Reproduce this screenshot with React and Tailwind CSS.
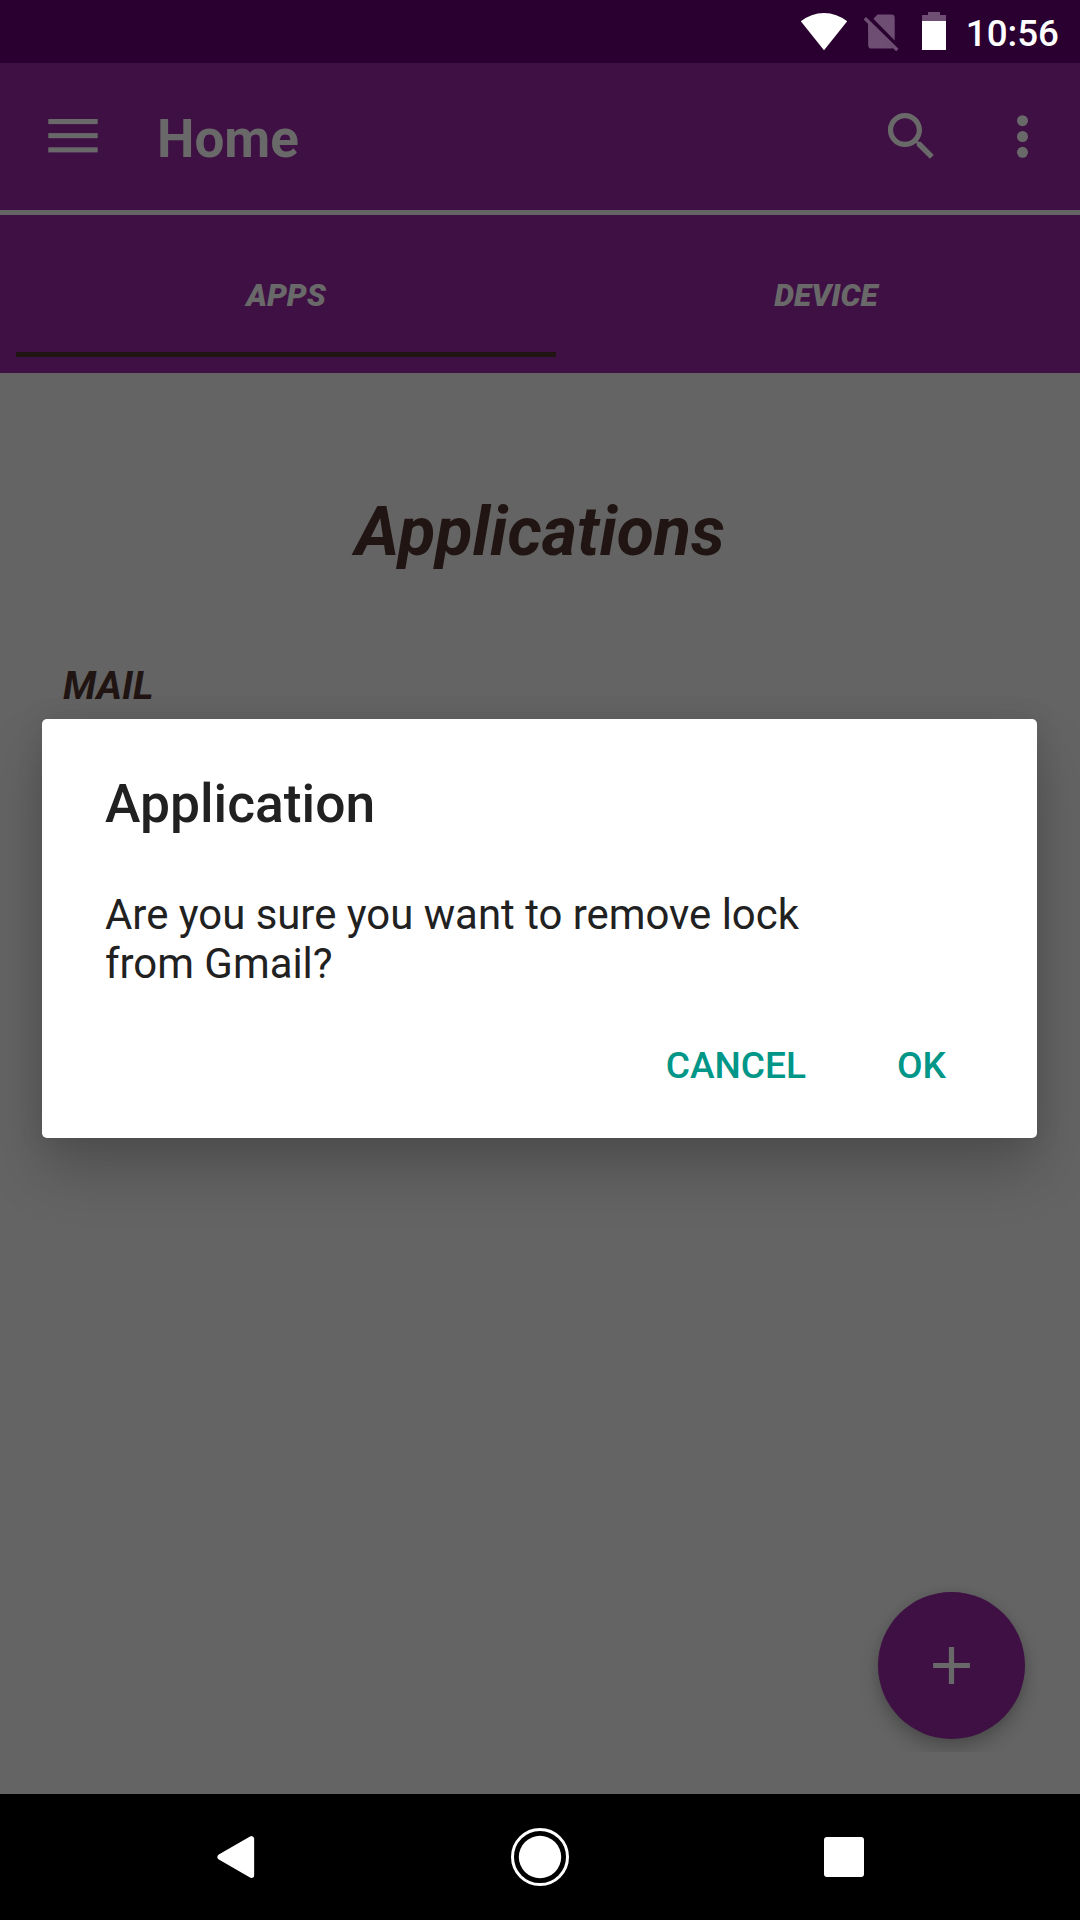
function StatusBar() {
  return (
    <div className="flex h-[63px] items-start justify-end bg-[#2a0030] pr-[21px]">
      <svg className="mt-[12px] h-[40px] w-[48px]" viewBox="0 0 48 40">
        <path d="M24 38.2 L0.8 9.2 A37 37 0 0 1 47.2 9.2 Z" fill="#fff" />
      </svg>
      <svg className="mt-[12px] ml-[15px] h-[42px] w-[37px]" viewBox="0 0 37 42">
        <path d="M14.5 2.6 H28.5 Q31.7 2.6 31.7 6 V28.6 L10.4 6.8 Z" fill="#6e4f73" />
        <path d="M5 10.2 L30 36 Q29 36.6 28 36.6 H8.5 Q5.2 36.6 5.2 33.5 Z" fill="#6e4f73" />
        <path d="M1.8 6.3 L34.3 38" stroke="#6e4f73" strokeWidth="3.4" />
      </svg>
      <svg className="mt-[12px] ml-[22px] h-[38px] w-[24px]" viewBox="0 0 24 38">
        <path d="M6 0 H18 V3 H24 V9 H0 V3 H6 Z" fill="#6e4f73" />
        <path d="M0 9 H24 V38 H0 Z" fill="#fff" />
      </svg>
      <span className="mt-[12px] ml-[20px] text-[36.75px] leading-[43px] font-medium text-white">10:56</span>
    </div>
  );
}

function Toolbar() {
  return (
    <header className="flex h-[147px] items-start bg-[#3f1044]">
      <svg className="mt-[56px] ml-[48px] h-[34px] w-[50px]" viewBox="0 0 50 34" fill="#696969">
        <rect x="0.3" y="0" width="49.4" height="5.1" />
        <rect x="0.3" y="14.1" width="49.4" height="5.1" />
        <rect x="0.3" y="28.3" width="49.4" height="5.1" />
      </svg>
      <h1 className="mt-[45px] ml-[59px] text-[53px] leading-[62px] font-bold text-[#696969]">Home</h1>
      <svg className="mt-[42px] mr-[48px] ml-auto h-[63px] w-[63px]" viewBox="0 0 24 24" fill="#696969">
        <path d="M15.5 14h-.79l-.28-.27C15.41 12.59 16 11.11 16 9.5 16 5.91 13.09 3 9.5 3S3 5.91 3 9.5 5.91 16 9.5 16c1.61 0 3.09-.59 4.23-1.57l.27.28v.79l5 4.99L20.49 19l-4.99-5zm-6 0C7.01 14 5 11.99 5 9.5S7.01 5 9.5 5 14 7.01 14 9.5 11.99 14 9.5 14z" />
      </svg>
      <svg className="mt-[42px] mr-[26px] h-[63px] w-[63px]" viewBox="0 0 63 63" fill="#696969">
        <circle cx="31.5" cy="15.7" r="5.5" />
        <circle cx="31.5" cy="31.5" r="5.5" />
        <circle cx="31.5" cy="47.3" r="5.5" />
      </svg>
    </header>
  );
}

function Tab({ label, active }) {
  return (
    <div className="flex w-[540px] shrink-0 flex-col text-center">
      <span className="mt-[62px] text-[31.5px] leading-[37px] font-black text-[#696969] italic">{label}</span>
      {active && <div className="mt-[38px] h-[5px] bg-[#201512]" />}
    </div>
  );
}

function Fab() {
  return (
    <div className="absolute top-[1572px] left-[858px] h-[180px] w-[180px] overflow-hidden pt-[20px] pl-[20px]">
      <div className="flex h-[147px] w-[147px] items-center justify-center rounded-full bg-[#3f1044] shadow-[0_10px_18px_rgba(0,0,0,0.22),0_0_8px_rgba(0,0,0,0.08)]">
        <svg className="h-[63px] w-[63px]" viewBox="0 0 63 63" fill="#696969">
          <path d="M28.9 13.1h5.2v15.8h15.8v5.2H34.1v15.8h-5.2V34.1H13.1v-5.2h15.8z" />
        </svg>
      </div>
    </div>
  );
}

function Dialog() {
  return (
    <div
      role="dialog"
      className="absolute top-[719px] left-[42px] flex h-[419px] w-[995px] flex-col rounded-[5px] bg-white px-[63px] text-[#212121] shadow-[0_32px_56px_rgba(0,0,0,0.21),0_0_28px_rgba(0,0,0,0.09)]"
    >
      <h2 className="mt-[54px] text-[53.4px] leading-[62px] font-medium">Application</h2>
      <p className="mt-[55px] text-[41.9px] leading-[49px]">
        Are you sure you want to remove lock
        <br />
        from Gmail?
      </p>
      <div className="mt-[56px] flex justify-end gap-[91px] pr-[28px] text-[37.1px] leading-[43px] font-medium text-[#009688]">
        <button>CANCEL</button>
        <button>OK</button>
      </div>
    </div>
  );
}

function NavBar() {
  return (
    <nav className="flex h-[126px] items-center justify-between bg-black pr-[216px] pl-[217px]">
      <svg className="h-[44px] w-[38px]" viewBox="0 0 38 44">
        <path d="M3.2 22 L34.4 3.8 V40.2 Z" fill="#fff" stroke="#fff" strokeWidth="5.5" strokeLinejoin="round" />
      </svg>
      <svg className="h-[58px] w-[58px]" viewBox="0 0 58 58">
        <circle cx="29" cy="29" r="27.5" fill="none" stroke="#fff" strokeWidth="3" />
        <circle cx="29" cy="29" r="21.2" fill="#fff" />
      </svg>
      <div className="h-[40px] w-[40px] rounded-[3px] bg-white" />
    </nav>
  );
}

export default function App() {
  return (
    <div className="relative flex h-[1920px] w-[1080px] flex-col overflow-hidden bg-[#646464] font-['Roboto',sans-serif]">
      <StatusBar />
      <Toolbar />
      <div className="mt-[5px] flex h-[158px] overflow-hidden bg-[#3f1044] pl-[16px]">
        <Tab label="APPS" active />
        <Tab label="DEVICE" />
      </div>
      <main className="flex flex-1 flex-col">
        <h2 className="mt-[119px] text-center text-[68px] leading-[80px] font-bold text-[#201512] italic">Applications</h2>
        <h3 className="mt-[91px] pl-[63px] text-[39px] leading-[46px] font-bold text-[#201512] italic">MAIL</h3>
      </main>
      <NavBar />
      <Fab />
      <Dialog />
    </div>
  );
}
